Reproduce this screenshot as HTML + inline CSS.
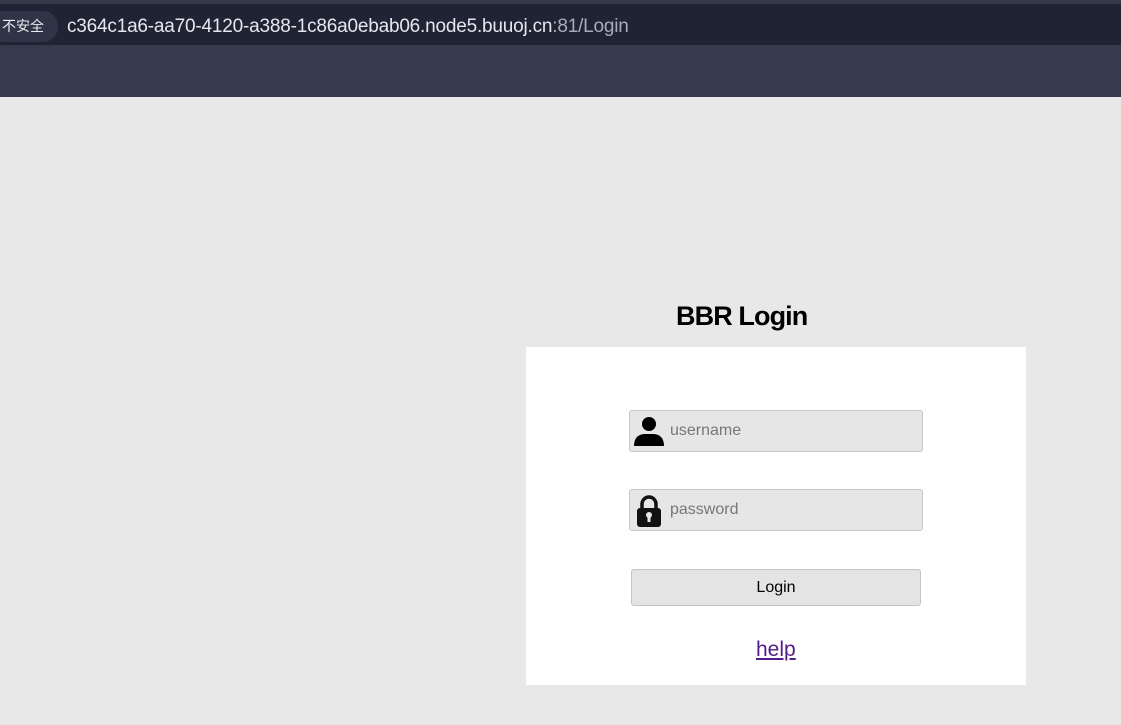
<!DOCTYPE html>
<html><head><meta charset="utf-8"><style>
*{margin:0;padding:0;box-sizing:border-box}
body{width:1121px;height:725px;background:#e8e8e8;position:relative;overflow:hidden;font-family:"Liberation Sans",sans-serif}
.top{position:absolute;left:0;top:0;width:1121px;height:97px;background:#363a4d}
.url{position:absolute;left:0;top:4px;width:1121px;height:41px;background:#1f2334}
.badge{position:absolute;left:-12px;top:7px;width:70px;height:31px;border-radius:15px;background:#2f3446;color:#e8e8ee;font:14px "Noto Sans CJK SC",sans-serif;line-height:31px;padding-left:14px}
.u{position:absolute;left:67px;top:12px;color:#e6e7ee;font:19px "Liberation Sans","DejaVu Sans",sans-serif;letter-spacing:-0.2px}
.u span{color:#a9acb8}
h1{position:absolute;left:676px;top:301px;font:bold 27px "Liberation Sans",sans-serif;letter-spacing:-0.9px;color:#000}
.box{position:absolute;left:526px;top:347px;width:500px;height:338px;background:#fff}
.in{position:absolute;left:629px;width:294px;height:42px;background:#e6e6e6;border:1px solid #c8c8c8;border-radius:3px;color:#777;font-size:16px;line-height:40px;padding-left:40px}
.in svg{position:absolute;left:2px;top:4px}
.btn{position:absolute;left:631px;top:569px;width:290px;height:37px;background:#e4e4e4;border:1px solid #c4c4c4;border-radius:3px;text-align:center;line-height:35px;font-size:16px;color:#000}
.help{position:absolute;left:756px;top:638px;color:#551a8b;text-decoration:underline;font:21px "Liberation Sans",sans-serif}
</style></head><body>
<div class="top"></div>
<div class="url"><div class="badge">不安全</div><div class="u">c364c1a6-aa70-4120-a388-1c86a0ebab06.node5.buuoj.cn<span>:81/Login</span></div></div>
<h1>BBR Login</h1>
<div class="box"></div>
<div class="in" style="top:410px"><svg width="34" height="32" viewBox="0 0 34 32"><circle cx="17" cy="9" r="7" fill="#000"/><path d="M2 31 Q2 20 12 19 L22 19 Q32 20 32 31 Z" fill="#000"/></svg>username</div>
<div class="in" style="top:489px"><svg width="34" height="34" viewBox="0 0 34 34"><path d="M10 15 V10 A7 7 0 0 1 24 10 V15" stroke="#111" stroke-width="3.5" fill="none"/><rect x="5" y="14" width="24" height="19" rx="3" fill="#111"/><circle cx="17" cy="21" r="3" fill="#e6e6e6"/><rect x="15.5" y="22" width="3" height="6" fill="#e6e6e6"/></svg>password</div>
<div class="btn">Login</div>
<div class="help">help</div>
</body></html>
